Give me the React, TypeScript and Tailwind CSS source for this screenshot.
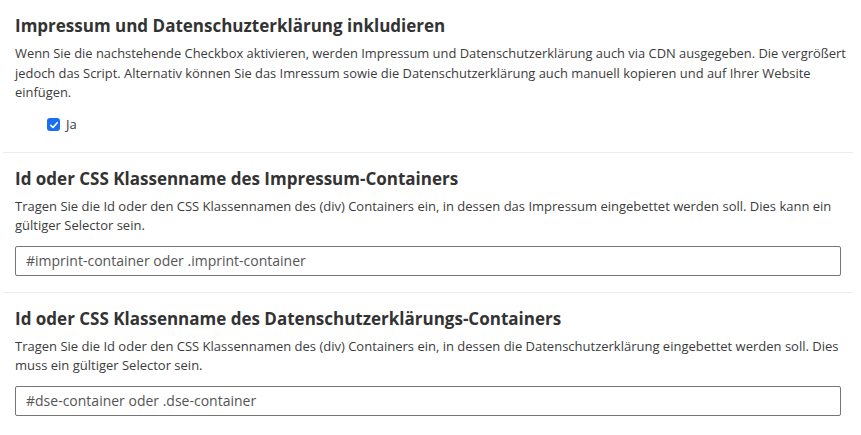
const sections = [
  {
    title: "Id oder CSS Klassenname des Impressum-Containers",
    text: "Tragen Sie die Id oder den CSS Klassennamen des (div) Containers ein, in dessen das Impressum eingebettet werden soll. Dies kann ein gültiger Selector sein.",
    placeholder: "#imprint-container oder .imprint-container",
  },
  {
    title: "Id oder CSS Klassenname des Datenschutzerklärungs-Containers",
    text: "Tragen Sie die Id oder den CSS Klassennamen des (div) Containers ein, in dessen die Datenschutzerklärung eingebettet werden soll. Dies muss ein gültiger Selector sein.",
    placeholder: "#dse-container oder .dse-container",
  },
];

function Checkbox() {
  return (
    <span className="inline-flex h-[13px] w-[13px] items-center justify-center rounded-[3px] bg-[#1a6ff0]">
      <svg viewBox="0 0 12 12" className="h-[10px] w-[10px]" fill="none">
        <path d="M2.2 6.4 4.8 9 9.8 3.2" stroke="white" strokeWidth="1.9" strokeLinecap="round" strokeLinejoin="round" />
      </svg>
    </span>
  );
}

export default function App() {
  return (
    <div className="min-h-screen bg-white font-['Open_Sans',sans-serif]">
      <div className="ml-[3px] w-[850px]">
        {/* Impressum & DSE */}
        <section className="px-3 pt-[14px] pb-[17px]">
          <h2 className="text-[17px] leading-6 font-bold text-[#333]">
            Impressum und Datenschuzterklärung inkludieren
          </h2>
          <p className="mt-[6px] mr-[-12px] text-[12.9px] leading-[19.5px] text-[#3c3c3c]">
            Wenn Sie die nachstehende Checkbox aktivieren, werden Impressum und Datenschutzerklärung auch via CDN ausgegeben. Die vergrößert jedoch das Script. Alternativ können Sie das Imressum sowie die Datenschutzerklärung auch manuell kopieren und auf Ihrer Website einfügen.
          </p>
          <label className="mt-3 ml-8 flex h-5 items-center gap-[6px] text-[13px] text-[#3c3c3c]">
            <Checkbox />
            <span>Ja</span>
          </label>
        </section>

        {sections.map((s) => (
          <section key={s.title} className="border-t border-[#ececec] px-3 pt-[14px] pb-4">
            <h2 className="text-[17px] leading-6 font-bold text-[#333]">{s.title}</h2>
            <p className="mt-[6px] text-[13px] leading-[19.5px] text-[#3c3c3c]">{s.text}</p>
            <input
              type="text"
              placeholder={s.placeholder}
              className="mt-[10px] block h-[30px] w-full rounded-[2px] border border-[#767676] px-[10px] text-[14px] text-[#333] placeholder:text-[#555] outline-none"
            />
          </section>
        ))}
      </div>
    </div>
  );
}
